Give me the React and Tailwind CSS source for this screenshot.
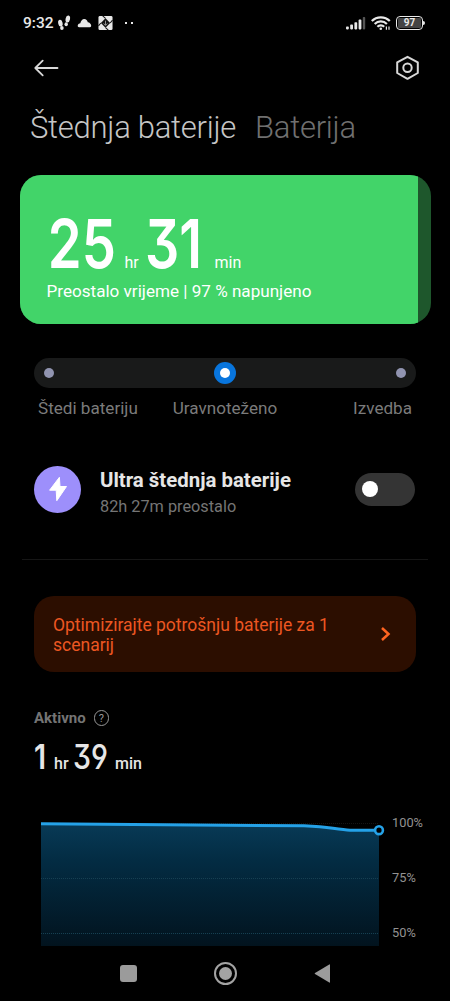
import React from 'react';

function StatusBar() {
    return (
        <div className="h-[46px] pl-[23px] pr-[25px] flex items-center justify-between text-[#e8e8e8]">
            <div className="flex items-center">
                <span className="w-[31px] pt-[1px] text-[15.5px] leading-none font-medium whitespace-nowrap">9:32</span>
                <svg className="ml-[3px]" width="15" height="18" viewBox="0 0 15 18" fill="currentColor">
                    <ellipse cx="3.4" cy="9.2" rx="2.2" ry="3.4" transform="rotate(-12 3.4 9.2)" />
                    <ellipse cx="4.9" cy="14" rx="1.8" ry="2" />
                    <ellipse cx="10.8" cy="5" rx="2.2" ry="3.5" transform="rotate(12 10.8 5)" />
                    <ellipse cx="9.2" cy="10.2" rx="1.7" ry="2" />
                </svg>
                <svg className="ml-[5px]" width="15" height="10" viewBox="0 0 15 10" fill="currentColor">
                    <path d="M2.2 9.2C.8 9.2.4 7.9.9 6.9 1.3 6 2.3 5.3 3.3 5.2 4 2.9 5.3 1 7.2 1 9.2 1 10.4 2.5 10.8 4.2 12.6 4.3 14.2 6 14.2 7.8 14.2 8.7 13.7 9.2 13 9.2Z" />
                </svg>
                <svg className="ml-[6px]" width="15" height="16" viewBox="0 0 16 16">
                    <rect x="0.5" y="0.5" width="15" height="15" rx="1.5" fill="currentColor" />
                    <path d="M8 3 13 8 8 13 3 8Z" fill="#111" />
                    <path d="M8 3 5 0.5M13 8 15.5 5M8 13 11 15.5M3 8 0.5 11" stroke="#111" strokeWidth="1.1" />
                    <path d="M8 5.5v5M6 8.5l2 2 2-2" stroke="#999" strokeWidth="1" fill="none" />
                </svg>
                <span className="ml-[12px] flex gap-[4px]">
                    <i className="size-[2px] bg-current" />
                    <i className="size-[2px] bg-current" />
                </span>
            </div>
            <div className="flex items-center">
                <svg width="20" height="14" viewBox="0 0 20 14" fill="currentColor">
                    <rect x="0" y="10.6" width="2.8" height="2.8" rx="0.8" />
                    <rect x="4.2" y="8.6" width="2.8" height="4.8" rx="0.8" />
                    <rect x="8.4" y="6.2" width="2.8" height="7.2" rx="0.8" />
                    <rect x="12.6" y="3.6" width="2.8" height="9.8" rx="0.8" />
                    <rect x="16.8" y="1" width="2.4" height="12.4" rx="0.8" fill="#555" />
                </svg>
                <svg className="ml-[5px]" width="20" height="16" viewBox="0 0 20 16" fill="none" stroke="currentColor" strokeWidth="2.2">
                    <path d="M0.8 6.1a12.6 12.6 0 0 1 18 0" />
                    <path d="M3.7 9a8.6 8.6 0 0 1 12.2 0" />
                    <path d="M6.4 11.8a4.8 4.8 0 0 1 6.8 0" />
                    <circle cx="9.8" cy="13.8" r="1.3" fill="currentColor" stroke="none" />
                    <path d="M15.4 11.5v3.2M18 11.5v3.2" strokeWidth="1.2" />
                </svg>
                <div className="ml-[5px] w-[27px] h-[14px] rounded-[4px] border-[1.5px] border-current p-px">
                    <div className="h-full rounded-[1px] bg-[#444] text-[10px] font-bold leading-[10.5px] text-center">97</div>
                </div>
                <i className="w-[2px] h-[4px] rounded-r-sm bg-current" />
            </div>
        </div>
    );
}

function Toolbar() {
    return (
        <div className="h-[44px] pl-[34px] pr-[30px] flex items-center justify-between text-[#d8d8d8]">
            <svg width="26" height="18" viewBox="0 0 26 18" fill="none" stroke="currentColor" strokeWidth="1.8" strokeLinecap="round" strokeLinejoin="round">
                <path d="M23.5 9H1.5M8.7 1.7 1.3 9 8.7 16.3" />
            </svg>
            <svg width="25" height="26" viewBox="0 0 25 26" fill="none" stroke="currentColor" strokeWidth="2" strokeLinejoin="round">
                <path d="M12.5 1.8 22.8 7.4V18L12.5 23.8 2.2 18V7.4Z" />
                <circle cx="12.5" cy="12.8" r="4.2" />
            </svg>
        </div>
    );
}

// Digits are squeezed horizontally to get the narrow system numerals
function Digits({ children, className }) {
    return (
        <span className={`inline-block origin-left font-['Inter',sans-serif] leading-none [font-feature-settings:'cv09','ss01'] ${className}`}>
            {children}
        </span>
    );
}

function BatteryCard() {
    return (
        <div className="mx-[19.5px] mt-[25px] h-[148.5px] rounded-[21px] overflow-hidden bg-[#1e572c] flex text-white">
            <div className="w-[398.5px] bg-[#42d469] pl-[27px] pt-[34px]">
                <div className="flex items-baseline h-[70px]">
                    <Digits className="pl-[1px] w-[78px] text-[68px] font-semibold scale-x-[0.8]">25</Digits>
                    <span className="w-[20px] text-[16px]">hr</span>
                    <Digits className="w-[70px] text-[68px] font-semibold scale-x-[0.79]">31</Digits>
                    <span className="text-[16px]">min</span>
                </div>
                <p className="text-[17.1px] leading-[24px] whitespace-nowrap">Preostalo vrijeme | 97 % napunjeno</p>
            </div>
        </div>
    );
}

function ModeSlider() {
    return (
        <div className="mx-[34px] mt-[34.5px]">
            <div className="h-[30px] rounded-full bg-[#191a1a] px-[10px] flex items-center justify-between">
                <i className="size-[10px] rounded-full bg-[#9194b0]" />
                <i className="size-[22px] rounded-full bg-[#0875dd] flex items-center justify-center">
                    <i className="size-[10px] rounded-full bg-white" />
                </i>
                <i className="size-[10px] rounded-full bg-[#9194b0]" />
            </div>
            <div className="mt-[8px] px-1 grid grid-cols-3 text-[17.1px] leading-6 text-[#7b7b7b]">
                <span>Štedi bateriju</span>
                <span className="text-center">Uravnoteženo</span>
                <span className="text-right">Izvedba</span>
            </div>
        </div>
    );
}

function UltraSaver() {
    return (
        <div className="ml-[34px] mr-[35px] mt-[45px] h-[48px] flex items-center">
            <div className="size-[47px] rounded-full bg-[#9d8ffb] flex items-center justify-center">
                <svg width="20" height="26" viewBox="0 0 20 26" fill="#fff" stroke="#fff" strokeWidth="1" strokeLinejoin="round">
                    <path d="M11.4 1.3 1.6 14.2H8.2L8.8 24.7 18.5 10.5H12Z" />
                </svg>
            </div>
            <div className="ml-[19px] pt-[7px] flex-1">
                <h2 className="text-[20.4px] leading-[26px] font-bold text-[#e6e6e6]">Ultra štednja baterije</h2>
                <p className="mt-[2px] text-[16.3px] leading-[24px] text-[#757575]">82h 27m preostalo</p>
            </div>
            <div className="w-[60px] h-[33px] rounded-full bg-[#343434] pl-[7px] flex items-center">
                <i className="size-[16px] rounded-full bg-white" />
            </div>
        </div>
    );
}

function OptimizeBanner() {
    return (
        <div className="mx-[34px] mt-[36px] h-[76px] rounded-[20px] bg-[#2c0e00] pl-[19px] pr-[25px] flex items-center justify-between">
            <p className="w-[290px] pt-[2px] text-[17.5px] leading-[20.5px] text-[#ec5722]">
                Optimizirajte potrošnju baterije za 1 scenarij
            </p>
            <svg width="11" height="16" viewBox="0 0 11 16" fill="none" stroke="#ff6420" strokeWidth="2.5">
                <path d="M2 2 8.5 8 2 14" />
            </svg>
        </div>
    );
}

function ActiveTime() {
    return (
        <div className="ml-[34px] mt-[34px]">
            <div className="flex items-center h-[24px] text-[#747474]">
                <span className="text-[15px] font-bold">Aktivno</span>
                <span className="ml-[8px] size-[15.5px] rounded-full border border-[#999] text-[#999] text-[11px] leading-none flex items-center justify-center">?</span>
            </div>
            <div className="flex items-baseline h-[44px] mt-[10px] text-[#e6e6e6]">
                <Digits className="w-[20px] text-[34px] font-semibold scale-x-[0.84]">1</Digits>
                <span className="w-[19px] text-[16px] font-medium">hr</span>
                <Digits className="w-[42px] text-[34px] font-medium scale-x-[0.84]">39</Digits>
                <span className="text-[16px] font-medium">min</span>
            </div>
        </div>
    );
}

function BatteryChart() {
    return (
        <div className="ml-[41px] mt-[32px] flex">
            <svg width="345" height="130" viewBox="0 0 345 130" fill="none">
                <defs>
                    <linearGradient id="area" x1="0" y1="0" x2="0" y2="1">
                        <stop offset="0" stopColor="#083a56" />
                        <stop offset="0.3" stopColor="#032c43" />
                        <stop offset="1" stopColor="#02131e" />
                    </linearGradient>
                </defs>
                <path d="M92 7.5H338" stroke="#151515" strokeDasharray="1 1" />
                <path d="M0 7.5 263 9.8Q280 10.2 292 12.5T309 14H338V130H0Z" fill="url(#area)" />
                <path d="M0 62.5H338M0 117.5H338" stroke="#164052" strokeDasharray="1 1" />
                <path d="M0 7.7 263 9.8Q280 10.6 292 12.3T309 14.2H334" stroke="#25a2e8" strokeWidth="3" />
                <circle cx="338" cy="14.2" r="3.9" fill="#000" stroke="#25a2e8" strokeWidth="2.6" />
            </svg>
            <div className="ml-[6px] flex flex-col gap-[35px] text-[12.8px] leading-[20px] text-[#929292] -mt-[3px]">
                <span>100%</span>
                <span>75%</span>
                <span>50%</span>
            </div>
        </div>
    );
}

function NavBar() {
    return (
        <div className="h-[55px] flex items-center justify-center gap-[77px]">
            <i className="size-[17px] rounded-[3px] bg-[#9b9b9b]" />
            <i className="size-[23px] rounded-full border-2 border-[#a3a3a3] flex items-center justify-center">
                <i className="size-[13px] rounded-full bg-[#a3a3a3]" />
            </i>
            <svg width="17" height="19" viewBox="0 0 17 19" fill="#9b9b9b">
                <path d="M15.3.4Q16 0 16 .9V18.1Q16 19 15.3 18.6L1 10Q.3 9.5 1 9Z" />
            </svg>
        </div>
    );
}

export default function App() {
    return (
        <div className="w-[450px] h-[1001px] overflow-hidden bg-black flex flex-col font-['Roboto',sans-serif]">
            <StatusBar />
            <Toolbar />
            <div className="pl-[30px] mt-[16px] h-[44px] flex items-center gap-[19px] text-[31px] font-light tracking-[-0.26px] whitespace-nowrap">
                <h1 className="text-[#c6c6c6]">Štednja baterije</h1>
                <span className="text-[#707070]">Baterija</span>
            </div>
            <BatteryCard />
            <ModeSlider />
            <UltraSaver />
            <div className="mx-[22px] mt-[46px] h-px bg-[#161616]" />
            <OptimizeBanner />
            <ActiveTime />
            <BatteryChart />
            <NavBar />
        </div>
    );
}
